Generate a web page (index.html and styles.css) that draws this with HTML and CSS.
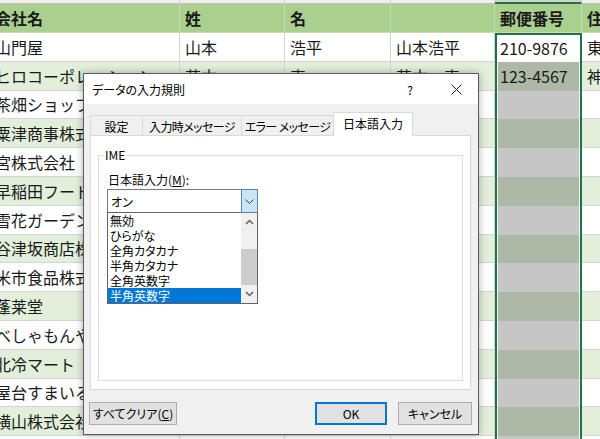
FILE: index.html
```html
<!DOCTYPE html>
<html lang="ja">
<head>
<meta charset="utf-8">
<title>データの入力規則</title>
<link rel="stylesheet" href="styles.css">
</head>
<body>
<div class="sheet">
  <div class="row top">
    <div class="ch"></div><div class="ch"></div><div class="ch"></div><div class="ch"></div><div class="ch sel"></div><div class="ch"></div>
  </div>
  <div class="row hdr">
    <div class="c a"><span>会社名</span></div><div class="c">姓</div><div class="c">名</div><div class="c"></div><div class="c eh">郵便番号</div><div class="c">住所</div>
  </div>
  <div class="row">
    <div class="c a"><span>山門屋</span></div><div class="c">山本</div><div class="c">浩平</div><div class="c">山本浩平</div><div class="c e act">210-9876</div><div class="c">東京都</div>
  </div>
  <div class="row g">
    <div class="c a"><span>ヒロコーポレーション</span></div><div class="c">芦本</div><div class="c">恵</div><div class="c">芦本　恵</div><div class="c e">123-4567</div><div class="c">神奈川県</div>
  </div>
  <div class="row">
    <div class="c a"><span>茶畑ショップ</span></div><div class="c"></div><div class="c"></div><div class="c"></div><div class="c e"></div><div class="c"></div>
  </div>
  <div class="row g">
    <div class="c a"><span>粟津商事株式会社</span></div><div class="c"></div><div class="c"></div><div class="c"></div><div class="c e"></div><div class="c"></div>
  </div>
  <div class="row">
    <div class="c a"><span>宮株式会社</span></div><div class="c"></div><div class="c"></div><div class="c"></div><div class="c e"></div><div class="c"></div>
  </div>
  <div class="row g">
    <div class="c a"><span>早稲田フード</span></div><div class="c"></div><div class="c"></div><div class="c"></div><div class="c e"></div><div class="c"></div>
  </div>
  <div class="row">
    <div class="c a"><span>雪花ガーデン</span></div><div class="c"></div><div class="c"></div><div class="c"></div><div class="c e"></div><div class="c"></div>
  </div>
  <div class="row g">
    <div class="c a"><span>谷津坂商店株式会社</span></div><div class="c"></div><div class="c"></div><div class="c"></div><div class="c e"></div><div class="c"></div>
  </div>
  <div class="row">
    <div class="c a"><span>米市食品株式会社</span></div><div class="c"></div><div class="c"></div><div class="c"></div><div class="c e"></div><div class="c"></div>
  </div>
  <div class="row g">
    <div class="c a"><span>蓬莱堂</span></div><div class="c"></div><div class="c"></div><div class="c"></div><div class="c e"></div><div class="c"></div>
  </div>
  <div class="row">
    <div class="c a"><span>べしゃもんや</span></div><div class="c"></div><div class="c"></div><div class="c"></div><div class="c e"></div><div class="c"></div>
  </div>
  <div class="row g">
    <div class="c a"><span>北冷マート</span></div><div class="c"></div><div class="c"></div><div class="c"></div><div class="c e"></div><div class="c"></div>
  </div>
  <div class="row">
    <div class="c a"><span>屋台すまいる</span></div><div class="c"></div><div class="c"></div><div class="c"></div><div class="c e"></div><div class="c"></div>
  </div>
  <div class="row g">
    <div class="c a"><span>横山株式会社</span></div><div class="c"></div><div class="c"></div><div class="c"></div><div class="c e"></div><div class="c"></div>
  </div>
  <div class="row last">
    <div class="c a"></div><div class="c"></div><div class="c"></div><div class="c"></div><div class="c e"></div><div class="c"></div>
  </div>
</div>

<div class="dlg">
  <div class="tb">
    <span class="t">データの入力規則</span>
    <span class="q">?</span>
    <svg class="x" width="11" height="11" viewBox="0 0 11 11"><path d="M0.5 0.5L10.5 10.5M10.5 0.5L0.5 10.5" stroke="#222" stroke-width="1" fill="none"/></svg>
  </div>
  <div class="bd">
    <div class="tabs">
      <div class="tab w1">設定</div>
      <div class="tab w2">入力時メッセージ</div>
      <div class="tab w3">エラー メッセージ</div>
      <div class="tab w4 on">日本語入力</div>
    </div>
    <div class="panel">
      <fieldset class="grp">
        <legend>IME</legend>
        <div class="lbl">日本語入力(<u>M</u>):</div>
        <div class="combo">
          <span class="val">オン</span>
          <span class="arrow"><svg width="9" height="5" viewBox="0 0 9 5"><path d="M0.5 0.5L4.5 4.5L8.5 0.5" stroke="#3a3a3a" stroke-width="1" fill="none"/></svg></span>
        </div>
        <div class="list">
          <div class="items">
            <div class="it">無効</div>
            <div class="it">ひらがな</div>
            <div class="it">全角カタカナ</div>
            <div class="it">半角カタカナ</div>
            <div class="it">全角英数字</div>
            <div class="it sel">半角英数字</div>
          </div>
          <div class="sb">
            <div class="sbtn"><svg width="9" height="6" viewBox="0 0 9 6"><path d="M1 5L4.5 1.5L8 5" stroke="#606060" stroke-width="1.5" fill="none"/></svg></div>
            <div class="track"></div>
            <div class="thumb"></div>
            <div class="sbtn"><svg width="9" height="6" viewBox="0 0 9 6"><path d="M1 1L4.5 4.5L8 1" stroke="#606060" stroke-width="1.5" fill="none"/></svg></div>
          </div>
        </div>
      </fieldset>
    </div>
    <div class="btns">
      <div class="btn clr">すべてクリア(<u>C</u>)</div>
      <div class="btn ok">OK</div>
      <div class="btn cancel">キャンセル</div>
    </div>
  </div>
</div>
</body>
</html>
```

FILE: styles.css
```css
* { box-sizing: border-box; margin: 0; padding: 0; }
html, body { width: 600px; height: 439px; overflow: hidden; background: #fff; }
body { position: relative; font-family: "Noto Sans CJK JP", "Noto Sans", sans-serif; color: #1a1a1a; }

.sheet { display: flex; flex-direction: column; font-size: 16px; height: 439px; overflow: hidden; }
.row { display: grid; grid-template-columns: 180px 105px 106px 104px 87px 40px; height: 28.8px; flex: none; }
.row.top { height: 4px; }
.row.hdr { height: 29px; }
.row.last { height: 3px; }

.ch { background: #efefef; border-right: 1px solid #cfcfcf; border-bottom: 1px solid #bdbdbd; }
.ch.sel { background: #d2d2d2; border-bottom: 2px solid #217346; }

.c { display: flex; align-items: center; padding-left: 5px; border-right: 1px solid #d4d4d4; border-bottom: 1px solid #d4d4d4; white-space: nowrap; overflow: hidden; line-height: 1; background: #fff; }
.c.a { padding-left: 0; }
.c.a span { margin-left: -5px; }
.row.last .c { border-bottom: none; }

.hdr .c { background: #a9d08e; font-weight: 700; border-color: #c6dcb6; }
.g .c { background: #e2efda; }

.c.e { background: #c6c6c6; border-left: 2px solid #217346; border-right: 2px solid #217346; border-bottom: none; padding-left: 3px; box-shadow: inset 1px 0 #f4f4f4, inset -1px 0 #f4f4f4; }
.g .c.e { background: #adb9a6; }
.c.e.act { background: #fff; border-top: 2px solid #217346; box-shadow: none; }

.dlg { position: absolute; left: 83px; top: 73px; width: 396px; height: 362px; border: 1px solid #5a5a5a; background: #f0f0f0; box-shadow: 0 0 8px rgba(0,0,0,0.3); display: flex; flex-direction: column; font-size: 12px; color: #000; font-feature-settings: "palt"; }
.tb { height: 30px; background: #fff; display: flex; align-items: center; padding-left: 8px; flex: none; }
.tb .t { margin-right: auto; }
.tb .q { width: 12px; text-align: center; font-size: 12px; }
.tb .x { margin-left: 35px; margin-right: 16px; }

.bd { flex: 1; padding: 8px 7px 0 6px; display: flex; flex-direction: column; }
.tabs { display: flex; height: 23px; align-items: flex-end; flex: none; }
.tab { height: 20px; border: 1px solid #d9d9d9; border-bottom: none; margin-right: -1px; display: flex; align-items: center; justify-content: center; background: #f0f0f0; padding-top: 1px; white-space: nowrap; letter-spacing: -0.6px; }
.tab.w1 { width: 53px; letter-spacing: 0; }
.tab.w2 { width: 100px; }
.tab.w3 { width: 93px; }
.tab.w4 { width: 80px; letter-spacing: 0; }
.tab.on { height: 24px; margin-bottom: -1px; background: #fff; position: relative; z-index: 2; padding-top: 0; padding-bottom: 2px; }

.panel { height: 255px; flex: none; background: #fff; border: 1px solid #d9d9d9; padding: 11px 7px 8px 7px; display: flex; flex-direction: column; position: relative; z-index: 1; }
.grp { flex: 1; border: 1px solid #dcdcdc; padding: 0 9px; min-width: 0; }
.grp legend { margin-left: -4px; padding: 0 1px; line-height: 16px; }
.lbl { margin-top: 9px; line-height: 16px; }
.combo { margin-top: 1px; margin-left: -1px; width: 151px; height: 24px; border: 1px solid #7a7a7a; background: #fff; display: flex; align-items: center; }
.combo .val { flex: 1; padding-left: 3px; }
.combo .arrow { width: 17px; height: 24px; margin: -1px -1px -1px 0; border: 1px solid #4f87b8; background: #cce4f7; display: flex; align-items: center; justify-content: center; }

.list { margin-top: -1px; margin-left: -1px; width: 151px; height: 92px; border: 1px solid #646464; background: #fff; display: flex; }
.items { flex: 1; }
.it { height: 15px; line-height: 15px; padding-left: 2px; white-space: nowrap; }
.it.sel { background: #0078d7; color: #fff; }
.sb { width: 16px; background: #f0f0f0; display: flex; flex-direction: column; }
.sbtn { height: 17px; display: flex; align-items: center; justify-content: center; flex: none; }
.track { height: 19px; flex: none; }
.thumb { height: 36px; background: #cdcdcd; flex: none; }

.btns { margin-top: 12px; margin-left: -1px; margin-right: -1px; display: flex; height: 23px; flex: none; }
.btn { height: 23px; border: 1px solid #adadad; background: #e1e1e1; display: flex; align-items: center; justify-content: center; white-space: nowrap; }
.btn.clr { width: 88px; margin-right: auto; }
.btn.ok { width: 72px; border-color: #0078d7; box-shadow: inset 0 0 0 1px #0078d7; }
.btn.cancel { width: 74px; margin-left: 11px; }
```
